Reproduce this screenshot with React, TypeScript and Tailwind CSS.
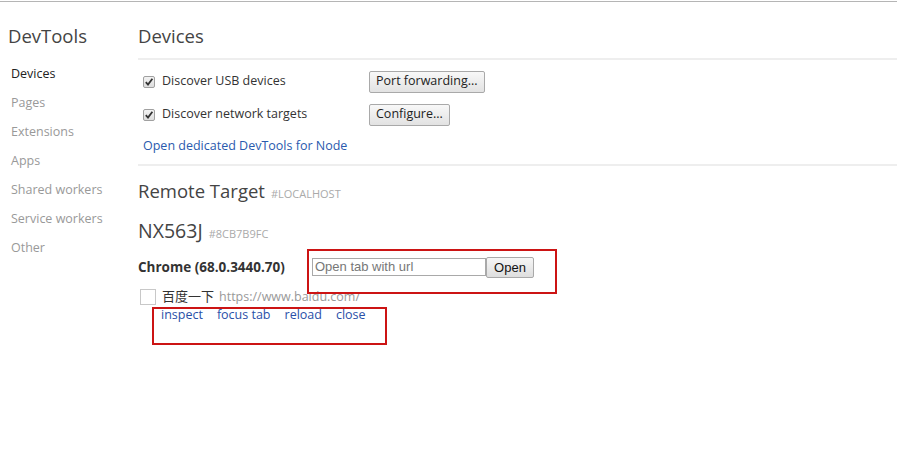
import React from 'react';

const font = { fontFamily: '"Open Sans", "Noto Sans CJK SC", sans-serif' };

function CheckedBox() {
  return (
    <svg width="12" height="12" viewBox="0 0 12 12" className="shrink-0">
      <defs>
        <linearGradient id="cb" x1="0" y1="0" x2="0" y2="1">
          <stop offset="0" stopColor="#f4f4f4" />
          <stop offset="1" stopColor="#dcdcdc" />
        </linearGradient>
      </defs>
      <rect x="0.5" y="0.5" width="11" height="11" rx="1.5" fill="url(#cb)" stroke="#a0a0a0" />
      <path d="M2.8 6.2 L5 8.6 L9.4 2.8" fill="none" stroke="#333" strokeWidth="1.8" />
    </svg>
  );
}

function Button({ children }: { children: React.ReactNode }) {
  return (
    <button className="h-[22px] px-[6px] rounded-[2px] border border-[#a9a9a9] bg-gradient-to-b from-[#f8f8f8] to-[#e2e2e2] text-[12.5px] text-[#222] leading-none">
      {children}
    </button>
  );
}

const navItems = ['Devices', 'Pages', 'Extensions', 'Apps', 'Shared workers', 'Service workers', 'Other'];

export default function App() {
  return (
    <div className="w-[897px] h-[450px] bg-white overflow-hidden text-[#333]" style={font}>
      <div className="h-px" />
      <div className="h-px bg-[#b5b5b5]" />
      <div className="flex">
        {/* sidebar */}
        <aside className="w-[138px] shrink-0">
          <div className="h-[21px]" />
          <h1 className="h-[26px] pl-[8px] text-[18.5px] leading-[26px] text-[#444] font-normal">DevTools</h1>
          <div className="h-[10px]" />
          <ul>
            {navItems.map((n, i) => (
              <li
                key={n}
                className={`h-[29px] leading-[29px] pl-[11px] text-[12.5px] ${i === 0 ? 'text-[#222]' : 'text-[#999]'}`}
              >
                {n}
              </li>
            ))}
          </ul>
        </aside>

        {/* main */}
        <main className="flex-1">
          <div className="h-[21px]" />
          <h2 className="h-[26px] text-[18.5px] leading-[26px] text-[#444] font-normal">Devices</h2>
          <div className="h-[9px]" />
          <div className="h-[2px] bg-[#eeeeee]" />
          <div className="pl-[5px]">
            <div className="h-[10px]" />
            <div className="flex items-center h-[22px] pt-px">
              <div className="w-[226px] flex items-center gap-[7px]">
                <CheckedBox />
                <span className="text-[12.5px]">Discover USB devices</span>
              </div>
              <Button>Port forwarding...</Button>
            </div>
            <div className="h-[11px]" />
            <div className="flex items-center h-[22px] pt-px">
              <div className="w-[226px] flex items-center gap-[7px]">
                <CheckedBox />
                <span className="text-[12.5px]">Discover network targets</span>
              </div>
              <Button>Configure...</Button>
            </div>
            <div className="h-[11px]" />
            <a className="block h-[19px] leading-[19px] text-[12.5px] text-[#2a5aae]">Open dedicated DevTools for Node</a>
          </div>
          <div className="h-[9px]" />
          <div className="h-[2px] bg-[#eeeeee]" />

          <div className="h-[13px]" />
          <div className="flex items-baseline gap-[6px] h-[24px] leading-[24px]">
            <span className="text-[18.5px] text-[#444]">Remote Target</span>
            <span className="text-[11px] text-[#aaa] uppercase">#LOCALHOST</span>
          </div>
          <div className="h-[16px]" />
          <div className="flex items-baseline gap-[6px] h-[24px] leading-[24px]">
            <span className="text-[19.5px] text-[#444]">NX563J</span>
            <span className="text-[11px] text-[#aaa]">#8CB7B9FC</span>
          </div>

          <div className="relative">
            <div className="h-[12px]" />
            <div className="flex items-center h-[24px]">
              <span className="w-[174px] text-[13.5px] font-bold text-[#333]">Chrome (68.0.3440.70)</span>
              <input
                placeholder="Open tab with url"
                className="h-[18px] w-[174px] border border-[#a9a9a9] px-[2px] text-[13px] placeholder:text-[#777] outline-none"
                style={{ fontFamily: '"Liberation Sans", Arial, sans-serif' }}
              />
              <button
                className="h-[21px] w-[48px] border border-[#a9a9a9] rounded-[2px] bg-gradient-to-b from-[#f6f6f6] to-[#dedede] text-[13px] text-[#111]"
                style={{ fontFamily: '"Liberation Sans", Arial, sans-serif' }}
              >
                Open
              </button>
            </div>

            <div className="h-[10px]" />
            <div className="flex items-center h-[16px] pl-[2px]">
              <span className="w-[16px] h-[16px] border border-[#c8c8c8] bg-white shrink-0" />
              <span className="ml-[6px] text-[13px] text-[#333]">百度一下</span>
              <span className="ml-[5px] text-[12.5px] text-[#999]">https://www.baidu.com/</span>
            </div>
            <div className="flex items-center h-[20px] pl-[23px] gap-[14px] text-[12.5px] text-[#2a4fa8]">
              <a>inspect</a>
              <a>focus tab</a>
              <a>reload</a>
              <a>close</a>
            </div>

            {/* red annotation boxes */}
            <div className="absolute left-[169px] top-[6px] w-[250px] h-[45px] border-2 border-[#cc1414]" />
            <div className="absolute left-[14px] top-[64px] w-[235px] h-[38px] border-2 border-[#cc1414]" />
          </div>
        </main>
      </div>
    </div>
  );
}
